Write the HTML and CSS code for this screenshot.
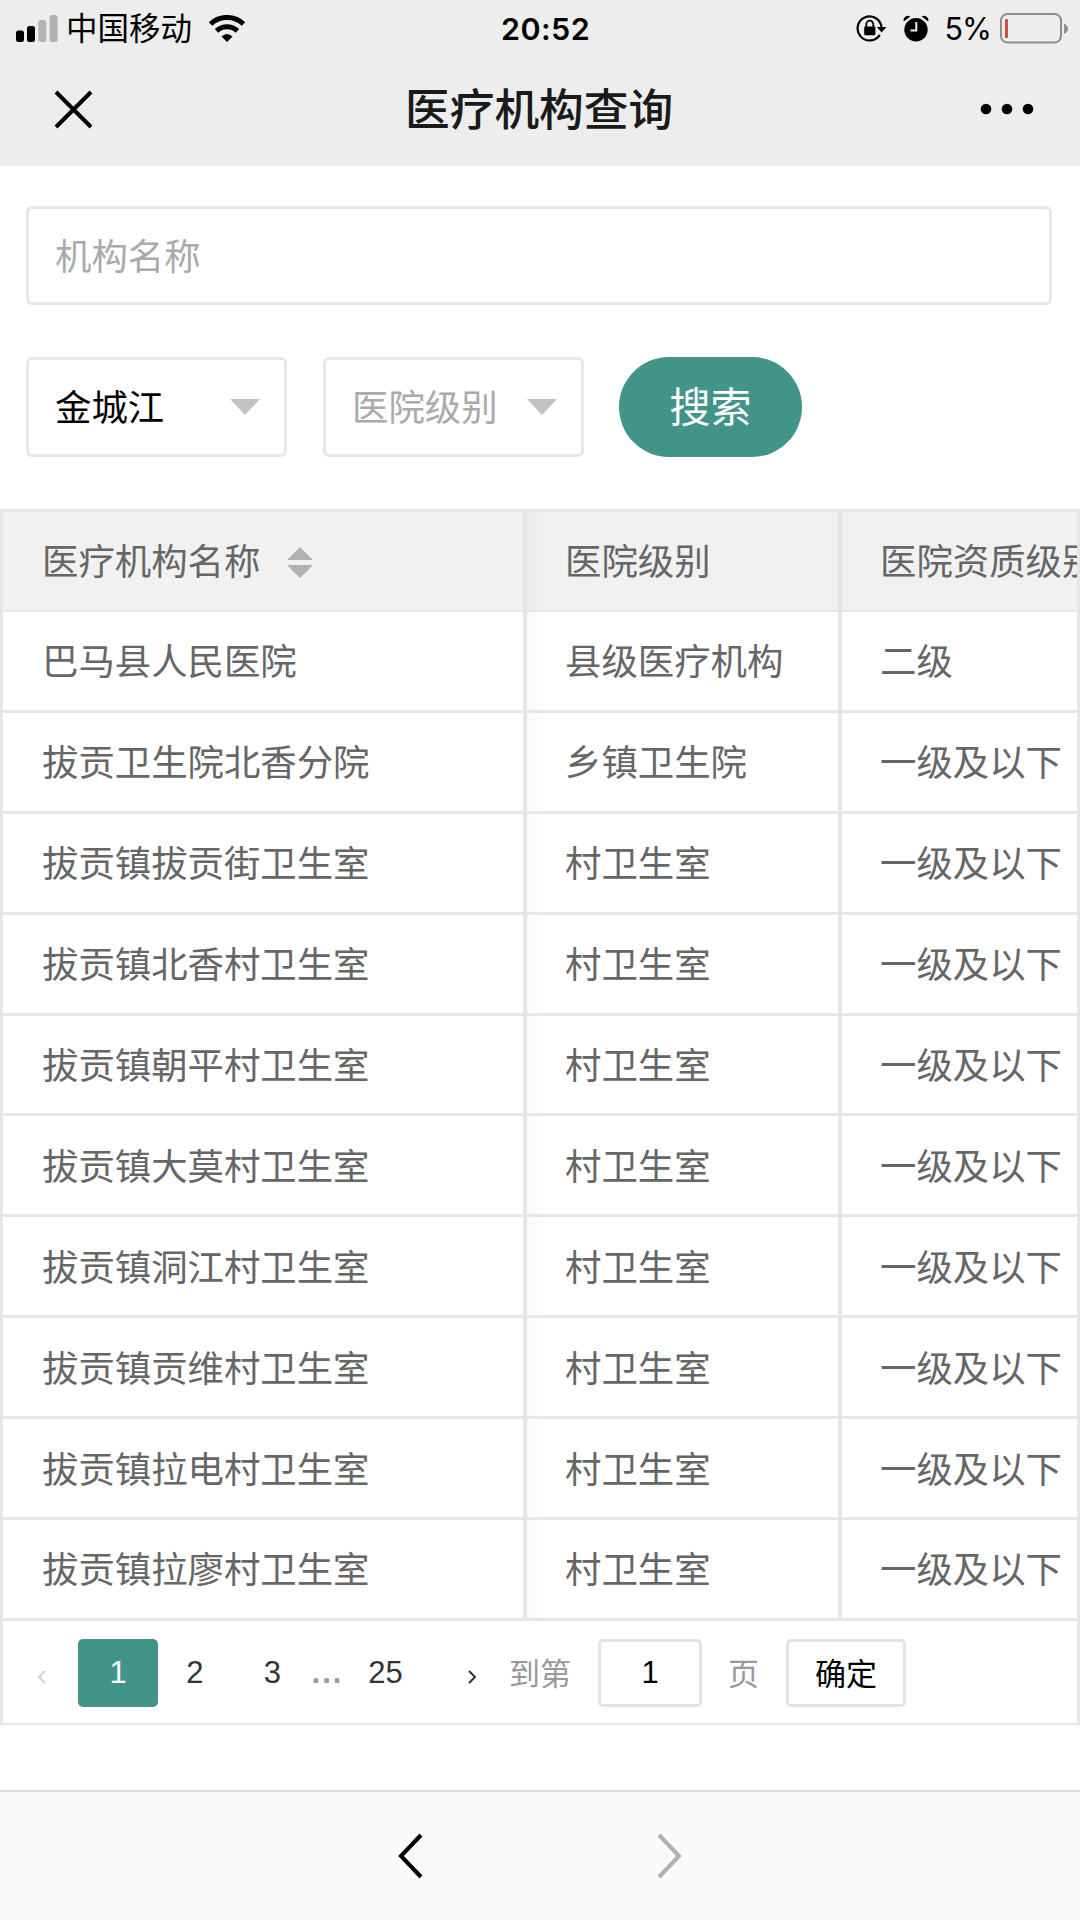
FILE: index.html
```html
<!DOCTYPE html>
<html lang="zh-CN">
<head>
<meta charset="utf-8">
<title>医疗机构查询</title>
<link rel="stylesheet" href="styles.css">
</head>
<body>
<header class="top">
  <div class="status">
    <div class="status-left">
      <svg class="signal" width="42" height="27" viewBox="0 0 42 27">
        <rect x="0" y="15.500" width="8" height="11.500" rx="2.500"/>
        <rect x="11" y="11" width="8" height="16" rx="2.500"/>
        <rect class="off" x="22.300" y="5" width="8" height="22" rx="2.500"/>
        <rect class="off" x="33.600" y="0" width="8" height="27" rx="2.500"/>
      </svg>
      <span class="carrier">中国移动</span>
      <svg class="wifi" width="38" height="27" viewBox="0 0 38 27">
        <path d="M2.500 9A24 24 0 0 1 35.500 9" class="arc"/>
        <path d="M8.500 15.800A15.500 15.500 0 0 1 29.500 15.800" class="arc"/>
        <path d="M13.500 21.500Q19 16.500 24.500 21.500L19 27Z"/>
      </svg>
    </div>
    <span class="time">20:52</span>
    <div class="status-right">
      <svg class="lock" width="31" height="28" viewBox="0 0 31 28">
        <path class="ring" d="M23.800 20.800A12 12 0 1 1 25.500 13"/>
        <path d="M20.800 13H30.500L25.600 18.500Z"/>
        <rect x="8.200" y="12.600" width="11.200" height="8.600" rx="1.200"/>
        <path class="shackle" d="M10.300 13V10.500a3.500 3.800 0 0 1 7 0V13"/>
      </svg>
      <svg class="alarm" width="26" height="27" viewBox="0 0 26 27">
        <circle cx="13" cy="14.800" r="11.700"/>
        <path d="M.8 6.600A4.500 4.500 0 0 1 7.300 1.400ZM25.200 6.600A4.500 4.500 0 0 0 18.700 1.400Z"/>
        <path class="hands" d="M13.300 7V15.500H7.500"/>
      </svg>
      <span class="percent">5%</span>
      <svg class="battery" width="69" height="31" viewBox="0 0 69 31">
        <rect class="case" x="1" y="1" width="60" height="28.500" rx="6.500"/>
        <path class="nub" d="M64 10.500Q68 12 68 15.500T64 21Z"/>
        <rect class="charge" x="5" y="6" width="3" height="19" rx="1"/>
      </svg>
    </div>
  </div>
  <div class="navbar">
    <svg class="close" width="39" height="39" viewBox="0 0 39 39"><path d="M2 2L37 37M37 2L2 37"/></svg>
    <h1 class="title">医疗机构查询</h1>
    <svg class="more" width="54" height="12" viewBox="0 0 54 12"><circle cx="6" cy="6" r="5.300"/><circle cx="27" cy="6" r="5.300"/><circle cx="48" cy="6" r="5.300"/></svg>
  </div>
</header>

<main class="content">
  <form class="search">
    <div class="field name-field">机构名称</div>
    <div class="filters">
      <div class="field select chosen"><span>金城江</span><i class="caret"></i></div>
      <div class="field select"><span>医院级别</span><i class="caret"></i></div>
      <div class="search-btn">搜索</div>
    </div>
  </form>

  <section class="grid">
    <div class="row head">
      <div class="cell c1">医疗机构名称
        <svg class="sort" width="26" height="31" viewBox="0 0 26 31"><path d="M0 13L13 0L26 13ZM0 18H26L13 31Z"/></svg>
      </div>
      <div class="cell c2">医院级别</div>
      <div class="cell c3">医院资质级别</div>
    </div>
    <div class="row"><div class="cell c1">巴马县人民医院</div><div class="cell c2">县级医疗机构</div><div class="cell c3">二级</div></div>
    <div class="row"><div class="cell c1">拔贡卫生院北香分院</div><div class="cell c2">乡镇卫生院</div><div class="cell c3">一级及以下</div></div>
    <div class="row"><div class="cell c1">拔贡镇拔贡街卫生室</div><div class="cell c2">村卫生室</div><div class="cell c3">一级及以下</div></div>
    <div class="row"><div class="cell c1">拔贡镇北香村卫生室</div><div class="cell c2">村卫生室</div><div class="cell c3">一级及以下</div></div>
    <div class="row"><div class="cell c1">拔贡镇朝平村卫生室</div><div class="cell c2">村卫生室</div><div class="cell c3">一级及以下</div></div>
    <div class="row"><div class="cell c1">拔贡镇大莫村卫生室</div><div class="cell c2">村卫生室</div><div class="cell c3">一级及以下</div></div>
    <div class="row"><div class="cell c1">拔贡镇洞江村卫生室</div><div class="cell c2">村卫生室</div><div class="cell c3">一级及以下</div></div>
    <div class="row"><div class="cell c1">拔贡镇贡维村卫生室</div><div class="cell c2">村卫生室</div><div class="cell c3">一级及以下</div></div>
    <div class="row"><div class="cell c1">拔贡镇拉电村卫生室</div><div class="cell c2">村卫生室</div><div class="cell c3">一级及以下</div></div>
    <div class="row"><div class="cell c1">拔贡镇拉廖村卫生室</div><div class="cell c2">村卫生室</div><div class="cell c3">一级及以下</div></div>

    <div class="pager">
      <span class="step prev"><svg width="9" height="14" viewBox="0 0 9 14"><path d="M8 1L2 7L8 13"/></svg></span>
      <span class="page current">1</span>
      <span class="page">2</span>
      <span class="page">3</span>
      <span class="dots">...</span>
      <span class="page last">25</span>
      <span class="step next"><svg width="9" height="14" viewBox="0 0 9 14"><path d="M1 1L7 7L1 13"/></svg></span>
      <span class="label goto">到第</span>
      <span class="box number">1</span>
      <span class="label unit">页</span>
      <span class="box confirm">确定</span>
    </div>
  </section>
</main>

<footer class="toolbar">
  <svg width="26" height="48" viewBox="0 0 26 48"><path d="M23 3L3 24L23 45"/></svg>
  <svg class="disabled" width="26" height="48" viewBox="0 0 26 48"><path d="M3 3L23 24L3 45"/></svg>
</footer>
</body>
</html>
```

FILE: styles.css
```css
* { box-sizing: border-box; }

body {
  margin: 0;
  width: 1080px;
  height: 1920px;
  overflow: hidden;
  display: flex;
  flex-direction: column;
  background: #fff;
  color: #666;
  font-family: "Liberation Sans", "Noto Sans CJK SC", sans-serif;
  font-size: 36.4px;
}

svg { display: block; flex: none; }

/* Status bar and title */
.top { height: 166px; flex: none; background: #ededed; color: #000; }
.status {
  height: 53px;
  padding: 0 11px 0 16px;
  display: grid;
  grid-template-columns: 485px auto 1fr;
  align-items: center;
  font-family: Inter, "Noto Sans CJK SC", sans-serif;
}
.status-left, .status-right { display: flex; align-items: center; }
.status-right { justify-content: flex-end; }
.signal .off { fill: #b2b2b2; }
.carrier { margin-left: 8px; font-size: 31.5px; line-height: 53px; }
.wifi { margin-left: 16px; }
.wifi .arc { fill: none; stroke: #000; stroke-width: 5; }
.time { padding-top: 2px; font-size: 30.5px; font-weight: 600; line-height: 54px; letter-spacing: .4px; }
.ring { fill: none; stroke: #000; stroke-width: 2.2; }
.shackle { fill: none; stroke: #000; stroke-width: 1.8; }
.alarm { margin-left: 16px; }
.hands { fill: none; stroke: #ededed; stroke-width: 2; }
.percent { padding-top: 2px; margin-left: 16px; font-size: 30.5px; line-height: 54px; letter-spacing: -1px; }
.battery { margin-left: 9px; }
.battery .case { fill: none; stroke: #8e8e8e; stroke-width: 2; }
.battery .nub { fill: #8e8e8e; }
.battery .charge { fill: #d9493f; }

.navbar {
  height: 113px;
  padding: 0 46px 0 54px;
  display: grid;
  grid-template-columns: 351px auto 1fr;
  align-items: center;
}
.close, .navbar .more { margin-bottom: 1px; }
.close path { fill: none; stroke: #000; stroke-width: 4; }
.title { margin: 0; padding-top: 2px; color: #1a1a1a; font-size: 44.7px; font-weight: 500; line-height: 111px; }
.more { justify-self: end; }

/* Search form */
.content { flex: 1; }
.search { padding: 40px 28px 0 26px; }
.field {
  height: 100px;
  padding: 0 26px 4px;
  display: flex;
  align-items: center;
  justify-content: space-between;
  border: 3px solid #e7e7e7;
  border-radius: 6px;
  color: #aaa;
}
.name-field { height: 99px; }
.filters { margin-top: 52px; display: flex; }
.select { width: 261px; margin-right: 36px; padding-right: 24px; }
.select + .search-btn { margin-left: -1px; }
.chosen { color: #000; }
.caret {
  margin-top: 3px;
  border: 15px solid transparent;
  border-top: 16px solid #c2c2c2;
  border-bottom: 0;
}
.search-btn {
  width: 183px;
  height: 100px;
  border-radius: 50px;
  background: #429488;
  color: #fff;
  font-size: 41px;
  line-height: 102px;
  text-align: center;
}

/* Results */
.grid { margin-top: 52px; border: 3px solid #e6e6e6; border-bottom-width: 2px; }
.row {
  height: 100.900px;
  display: grid;
  grid-template-columns: 524px 315px 1fr;
  border-bottom: 3px solid #e6e6e6;
}
.head { background: #f1f1f1; height: 100px; border-bottom-width: 2px; }
.cell {
  min-width: 0;
  padding-bottom: 3px;
  overflow: hidden;
  display: flex;
  align-items: center;
  border-right: 4px solid #e6e6e6;
  white-space: nowrap;
}
.head .cell { padding-bottom: 4px; }
.c1 { padding-left: 39px; }
.c2 { padding-left: 38px; background: linear-gradient(to right, rgba(0, 0, 0, .025), transparent 20px); }
.c3 { padding-left: 38px; border-right: 0; }
.sort { margin: 6px 0 0 27px; fill: #b2b2b2; }

/* Pagination */
.pager { height: 102px; padding: 2px 0 0 29px; display: flex; align-items: center; font-size: 31px; color: #333; }
.step { width: 46px; padding: 8px 0 0 5px; }
.step path { fill: none; stroke: #333; stroke-width: 2; }
.prev path { stroke: #d2d2d2; }
.page { width: 77.500px; text-align: center; }
.current { width: 80px; height: 68px; margin-right: -2px; line-height: 68px; border-radius: 5px; background: #429488; color: #fff; }
.dots { width: 35px; margin-left: -1px; text-align: center; font-weight: 700; color: #999; letter-spacing: 2px; }
.last { width: 81px; }
.next { margin-left: 37px; }
.label { padding-bottom: 3px; color: #999; }
.box { height: 68px; line-height: 62px; border: 3px solid #e3e3e3; border-radius: 5px; text-align: center; color: #000; }
.number { width: 104px; margin-left: 27px; }
.unit { margin-left: 26px; }
.confirm { width: 120px; margin-left: 27px; line-height: 65px; }

/* Browser toolbar */
.toolbar {
  height: 130px;
  flex: none;
  display: flex;
  justify-content: center;
  align-items: center;
  gap: 232px;
  border-top: 2px solid #dedede;
  background: #f9fafc;
}
.toolbar path { fill: none; stroke: #000; stroke-width: 4; }
.toolbar .disabled path { stroke: #b0b0b0; }
```
